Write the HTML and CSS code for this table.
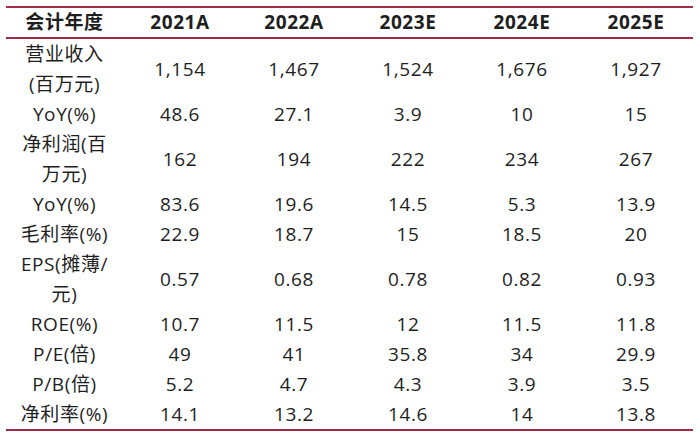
FILE: index.html
```html
<!DOCTYPE html>
<html lang="zh">
<head>
<meta charset="utf-8">
<link rel="stylesheet" href="styles.css">
</head>
<body>
<table class="fin">
  <colgroup>
    <col class="c-label"><col><col><col><col><col>
  </colgroup>
  <thead>
    <tr><th>会计年度</th><th>2021A</th><th>2022A</th><th>2023E</th><th>2024E</th><th>2025E</th></tr>
  </thead>
  <tbody>
    <tr class="tall"><td>营业收入<br>(百万元)</td><td>1,154</td><td>1,467</td><td>1,524</td><td>1,676</td><td>1,927</td></tr>
    <tr><td>YoY(%)</td><td>48.6</td><td>27.1</td><td>3.9</td><td>10</td><td>15</td></tr>
    <tr class="tall"><td>净利润(百<br>万元)</td><td>162</td><td>194</td><td>222</td><td>234</td><td>267</td></tr>
    <tr><td>YoY(%)</td><td>83.6</td><td>19.6</td><td>14.5</td><td>5.3</td><td>13.9</td></tr>
    <tr><td>毛利率(%)</td><td>22.9</td><td>18.7</td><td>15</td><td>18.5</td><td>20</td></tr>
    <tr class="tall"><td>EPS(摊薄/<br>元)</td><td>0.57</td><td>0.68</td><td>0.78</td><td>0.82</td><td>0.93</td></tr>
    <tr><td>ROE(%)</td><td>10.7</td><td>11.5</td><td>12</td><td>11.5</td><td>11.8</td></tr>
    <tr><td>P/E(倍)</td><td>49</td><td>41</td><td>35.8</td><td>34</td><td>29.9</td></tr>
    <tr><td>P/B(倍)</td><td>5.2</td><td>4.7</td><td>4.3</td><td>3.9</td><td>3.5</td></tr>
    <tr><td>净利率(%)</td><td>14.1</td><td>13.2</td><td>14.6</td><td>14</td><td>13.8</td></tr>
  </tbody>
</table>
</body>
</html>
```
FILE: styles.css
```css
html, body {
  margin: 0;
  padding: 0;
  background: #ffffff;
}
body {
  padding: 6px 7px 0 6px;
  font-family: "Open Sans", "Noto Sans CJK SC", sans-serif;
  color: #1e1e1e;
}
.fin {
  width: 687px;
  border-collapse: collapse;
  table-layout: fixed;
  font-size: 19px;
  letter-spacing: 0.6px;
}
.c-label {
  width: 117px;
}
.fin th, .fin td {
  padding: 0;
  text-align: center;
  vertical-align: middle;
  white-space: nowrap;
}
.fin thead th {
  height: 29px;
  font-weight: 700;
  border-top: 2px solid #a52a48;
  border-bottom: 2px solid #a52a48;
  line-height: 29px;
}
.fin tbody td {
  height: 30px;
  line-height: 30px;
}
.fin tbody tr.tall td {
  height: 60px;
}
.fin tbody tr:last-child td {
  border-bottom: 2px solid #a52a48;
}
```
